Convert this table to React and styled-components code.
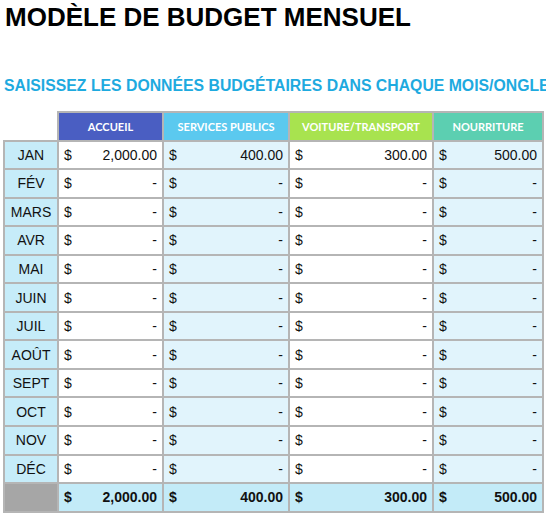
import styled, { createGlobalStyle } from "styled-components";

const GlobalStyle = createGlobalStyle`
  body {
    margin: 0;
    background: #ffffff;
    font-family: "Liberation Sans", Arial, sans-serif;
    overflow: hidden;
  }
`;

const months = [
  "JAN", "FÉV", "MARS", "AVR", "MAI", "JUIN",
  "JUIL", "AOÛT", "SEPT", "OCT", "NOV", "DÉC",
];

const categories = [
  { label: "ACCUEIL", color: "#4a5ec2", width: 105, shaded: false, jan: "2,000.00" },
  { label: "SERVICES PUBLICS", color: "#5bc9ef", width: 126, shaded: true, jan: "400.00" },
  { label: "VOITURE/TRANSPORT", color: "#a8e34f", width: 144, shaded: false, jan: "300.00" },
  { label: "NOURRITURE", color: "#5ccfb1", width: 110, shaded: true, jan: "500.00" },
];

export default function App() {
  return (
    <>
      <GlobalStyle />
      <Page>
        <Title>MODÈLE DE BUDGET MENSUEL</Title>
        <Subtitle>SAISISSEZ LES DONNÉES BUDGÉTAIRES DANS CHAQUE MOIS/ONGLET</Subtitle>

        <BudgetTable>
          <colgroup>
            <col style={{ width: 54 }} />
            {categories.map((c) => (
              <col key={c.label} style={{ width: c.width }} />
            ))}
          </colgroup>
          <thead>
            <tr>
              <Corner />
              {categories.map((c) => (
                <HeadCell key={c.label} $color={c.color}>
                  {c.label}
                </HeadCell>
              ))}
            </tr>
          </thead>
          <tbody>
            {months.map((m, i) => (
              <tr key={m}>
                <MonthCell>{m}</MonthCell>
                {categories.map((c) => (
                  <ValueCell key={c.label} $shaded={c.shaded}>
                    <Amount>
                      <span>$</span>
                      <span>{i === 0 ? c.jan : "-"}</span>
                    </Amount>
                  </ValueCell>
                ))}
              </tr>
            ))}
            <tr>
              <TotalLabel />
              {categories.map((c) => (
                <TotalCell key={c.label}>
                  <Amount>
                    <span>$</span>
                    <span>{c.jan}</span>
                  </Amount>
                </TotalCell>
              ))}
            </tr>
          </tbody>
        </BudgetTable>
      </Page>
    </>
  );
}

const Page = styled.div`
  padding: 2px 0 0 3px;
  width: 543px;
`;

const Title = styled.h1`
  margin: 0 0 0 2px;
  font-size: 26px;
  line-height: 30px;
  font-weight: bold;
  color: #000;
  white-space: nowrap;
`;

const Subtitle = styled.h2`
  margin: 45px 0 0 1px;
  font-size: 15.8px;
  line-height: 18px;
  font-weight: bold;
  color: #1eaadf;
  white-space: nowrap;
`;

const BudgetTable = styled.table`
  margin-top: 16px;
  border-collapse: collapse;
  table-layout: fixed;
  width: 539px;

  td,
  th {
    border: 2px solid #b5b5b5;
    height: 26.55px;
    padding: 0;
  }
`;

const Corner = styled.th`
  && {
    border: none;
  }
  background: #fff;
`;

const HeadCell = styled.th`
  background: ${(p) => p.$color};
  color: #fff;
  font-family: Lato, "Liberation Sans", sans-serif;
  font-size: 11px;
  font-weight: bold;
  text-align: center;
  white-space: nowrap;
`;

const MonthCell = styled.td`
  background: #c6ecf9;
  color: #111;
  font-size: 14px;
  text-align: center;
`;

const ValueCell = styled.td`
  background: ${(p) => (p.$shaded ? "#e1f4fc" : "#ffffff")};
  color: #111;
  font-size: 14px;
`;

const Amount = styled.div`
  display: flex;
  justify-content: space-between;
  padding: 0 5px 0 5px;
`;

const TotalLabel = styled.td`
  background: #a6a6a6;
`;

const TotalCell = styled.td`
  background: #c3ebf8;
  color: #111;
  font-size: 14px;
  font-weight: bold;
`;
